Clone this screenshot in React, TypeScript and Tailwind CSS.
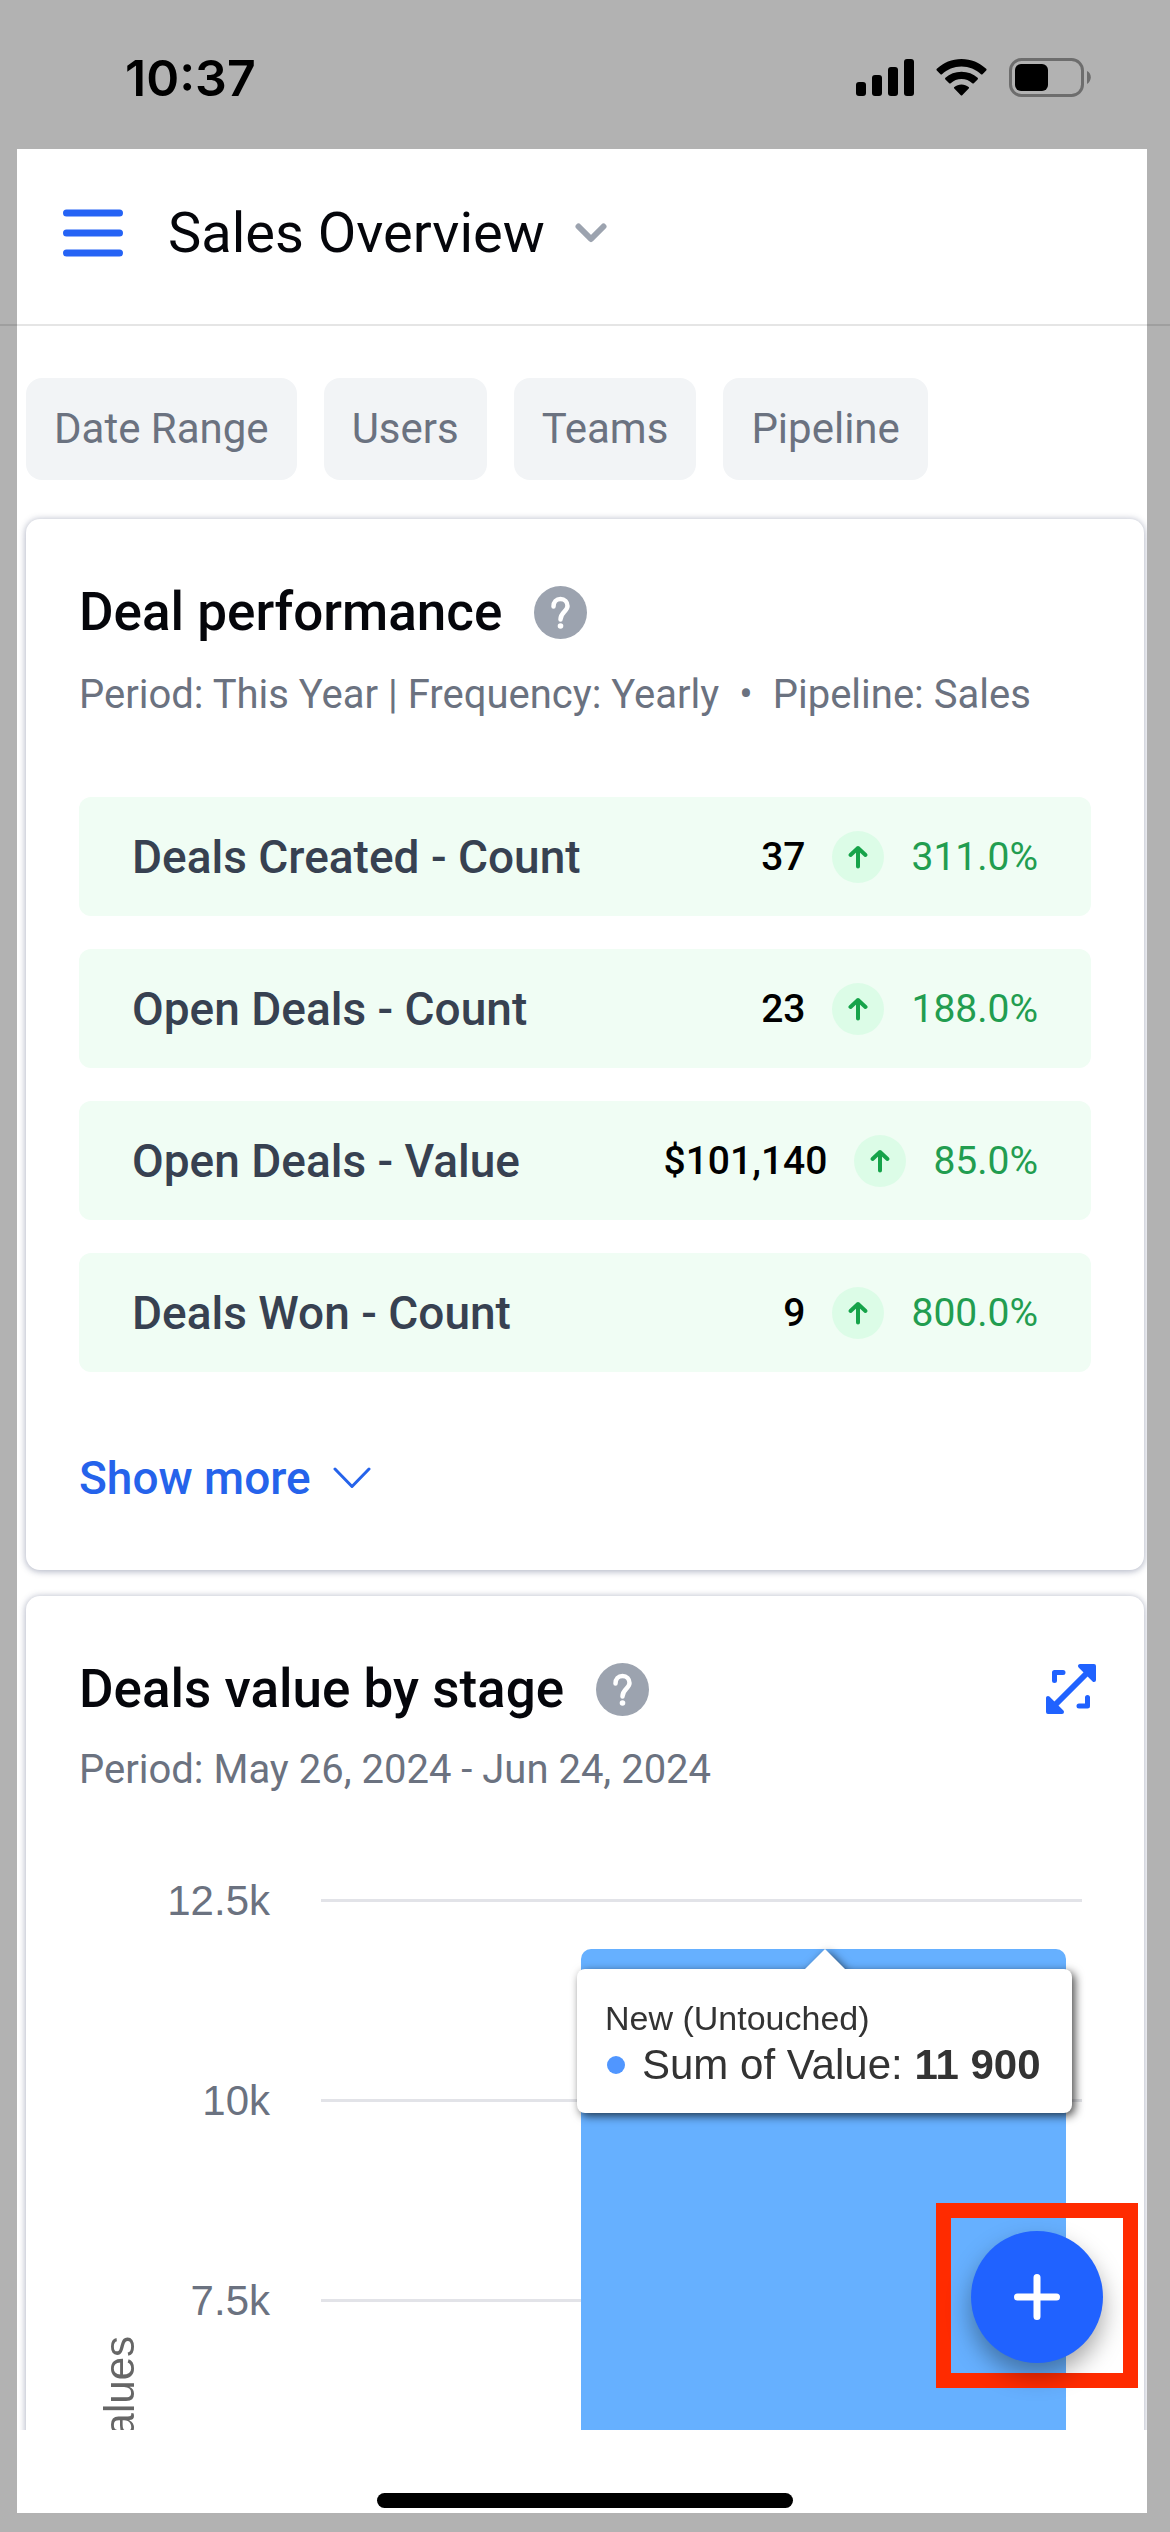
import React from 'react';

interface Metric {
  label: string;
  value: string;
  change: string;
}

const METRICS: Metric[] = [
  { label: 'Deals Created - Count', value: '37', change: '311.0%' },
  { label: 'Open Deals - Count', value: '23', change: '188.0%' },
  { label: 'Open Deals - Value', value: '$101,140', change: '85.0%' },
  { label: 'Deals Won - Count', value: '9', change: '800.0%' },
];

const FILTERS = ['Date Range', 'Users', 'Teams', 'Pipeline'];

const TICKS = ['12.5k', '10k', '7.5k'];

const StatusBar: React.FC = () => (
  <div className="flex h-[149px] shrink-0 items-center justify-between pt-3 pb-1.5 pl-[125px] pr-[79px] font-['Inter',sans-serif] text-[50px] leading-[60px] font-semibold text-black">
    <span>10:37</span>
    <div className="flex items-center gap-[22px]">
      <svg width="58" height="38" viewBox="0 0 58 38" fill="currentColor" aria-hidden="true">
        <rect x="0" y="23" width="10" height="14" rx="3" />
        <rect x="16" y="16" width="10" height="21" rx="3" />
        <rect x="32" y="8" width="10" height="29" rx="3" />
        <rect x="48" y="0" width="10" height="37" rx="3" />
      </svg>
      <svg width="51" height="38" viewBox="0 0 51 38" fill="currentColor" aria-hidden="true">
        <path d="M25.500 7.500C33 7.500 39.900 10.400 45 15.200C45.500 15.700 46.100 15.600 46.500 15.200L50.200 11.500C50.700 11 50.700 10.300 50.200 9.800C43.700 3.700 35 0 25.500 0S7.300 3.700.8 9.800C.3 10.300.3 11 .8 11.500L4.500 15.200C4.900 15.600 5.500 15.700 6 15.200C11.100 10.400 18 7.500 25.500 7.500Z" />
        <path d="M25.500 20C29.600 20 33.400 21.500 36.300 24.200C36.800 24.700 37.400 24.700 37.800 24.200L41.600 20.500C42.100 20 42.100 19.300 41.600 18.800C37.400 14.900 31.700 12.800 25.500 12.800S13.600 14.900 9.400 18.800C8.900 19.300 8.900 20 9.400 20.500L13.200 24.200C13.600 24.700 14.200 24.700 14.700 24.200C17.600 21.500 21.400 20 25.500 20Z" />
        <path d="M32.700 29.500C33.200 29 33.200 28.300 32.600 27.900C30.600 26.400 28.200 25.500 25.500 25.500S20.400 26.400 18.400 27.900C17.800 28.300 17.800 29 18.300 29.500L24.800 36.300C25.200 36.700 25.800 36.700 26.200 36.300Z" />
      </svg>
      <svg width="82" height="39" viewBox="0 0 82 39" aria-hidden="true">
        <rect x="1.500" y="1.500" width="72" height="36" rx="11" fill="none" stroke="#6d6d6d" strokeWidth="3" />
        <rect x="6" y="6" width="33" height="27" rx="6" fill="#000" />
        <path d="M78 13C83 15 83 23 78 26Z" fill="#6d6d6d" />
      </svg>
    </div>
  </div>
);

const HelpButton: React.FC<{ label: string }> = ({ label }) => (
  <button type="button" aria-label={label}>
    <svg width="53" height="53" viewBox="0 0 53 53" fill="none">
      <circle cx="26.500" cy="26.500" r="26.500" fill="#9ca3af" />
      <path d="M19.500 20.500C19.500 16 22.300 13 26.500 13S33.500 16 33.500 20C33.500 25.500 26.500 26 26.500 33.500" stroke="#fff" strokeWidth="4.500" strokeLinecap="round" />
      <circle cx="26.500" cy="40" r="2.800" fill="#fff" />
    </svg>
  </button>
);

const MetricRow: React.FC<{ metric: Metric }> = ({ metric }) => (
  <li className="flex h-[119px] items-center justify-between rounded-xl bg-[#f0fdf4] px-[53px]">
    <span className="text-[46px] leading-[56px] font-medium text-[#374151]">{metric.label}</span>
    <div className="flex items-center gap-[27px] text-[39px] leading-[48px]">
      <span className="font-medium text-black">{metric.value}</span>
      <span className="flex size-[52px] items-center justify-center rounded-full bg-[#dcfce7]">
        <svg width="22" height="26" viewBox="0 0 22 26" fill="none" stroke="#16a34a" strokeWidth="4" strokeLinecap="round" strokeLinejoin="round">
          <path d="M11 22.500V4M3.500 11L11 4L18.500 11" />
        </svg>
      </span>
      <span className="text-[#229d50]">{metric.change}</span>
    </div>
  </li>
);

const DealPerformanceCard: React.FC = () => (
  <section className="rounded-[14px] bg-white px-[53px] pt-[60px] pb-[64px] shadow-[0_1px_6px_1px_rgba(50,60,100,0.35)]">
    <div className="flex h-[66px] items-center gap-8">
      <h2 className="text-[53px] leading-[66px] font-medium text-[#05060b]">Deal performance</h2>
      <HelpButton label="About deal performance" />
    </div>
    <p className="mt-[26px] flex text-[40px] leading-[48px] text-[#6b7280]">
      <span>Period: This Year | Frequency: Yearly</span>
      <span className="px-5">•</span>
      <span>Pipeline: Sales</span>
    </p>
    <ul className="mt-[78px] flex flex-col gap-[33px]">
      {METRICS.map((metric) => (
        <MetricRow key={metric.label} metric={metric} />
      ))}
    </ul>
    <button type="button" className="mt-[78px] flex items-center gap-[22px] text-[46px] leading-[56px] font-medium text-[#2563eb]">
      Show more
      <svg width="38" height="22" viewBox="0 0 38 22" fill="none" stroke="currentColor" strokeWidth="3" strokeLinecap="round" strokeLinejoin="round">
        <path d="M2 2L19 19.500L36 2" />
      </svg>
    </button>
  </section>
);

const DealsByStageCard: React.FC = () => (
  <section className="rounded-[14px] bg-white px-[53px] pt-[60px] pb-[64px] shadow-[0_1px_6px_1px_rgba(50,60,100,0.35)]">
    <div className="flex h-[66px] items-center gap-8">
      <h2 className="text-[53px] leading-[66px] font-medium text-[#05060b]">Deals value by stage</h2>
      <HelpButton label="About deals value by stage" />
      <button type="button" aria-label="Expand chart" className="-mr-[5px] ml-auto text-[#2062ff]">
        <svg width="50" height="50" viewBox="0 0 50 50" fill="none" stroke="currentColor" strokeWidth="5" strokeLinecap="round" strokeLinejoin="round">
          <path d="M9 41L41 9" strokeWidth="6" />
          <path d="M34 2L48 2L48 16Z M2 34L2 48L16 48Z" fill="currentColor" strokeWidth="4" />
          <path d="M8.500 16.500V8.500H17 M33 42H41.500V33.500" />
        </svg>
      </button>
    </div>
    <p className="mt-6 text-[40px] leading-[48px] text-[#6b7280]">Period: May 26, 2024 - Jun 24, 2024</p>

    {/* Column chart: axis title, tick labels, plot */}
    <div className="mt-[105px] flex h-[1000px] pr-[9px] font-['Liberation_Sans',Arial,sans-serif]">
      <div className="-ml-1 flex w-[90px] items-center justify-center">
        <span className="rotate-180 text-[42px] leading-[48px] text-[#666] [writing-mode:vertical-rl]">Values</span>
      </div>
      <div className="-mt-[22px] flex w-[105px] flex-col">
        {TICKS.map((tick) => (
          <span key={tick} className="h-[200px] text-right text-[42px] leading-[48px] text-[#6b7280]">{tick}</span>
        ))}
      </div>
      <div className="relative ml-[51px] flex-1">
        {TICKS.map((tick) => (
          <div key={tick} className="h-[200px] border-t-3 border-[#e2e3e8]" />
        ))}
        <div className="absolute top-[50px] right-4 bottom-0 w-[485px] rounded-t-[10px] bg-[#66b0ff]">
          <div className="absolute top-5 -right-1.5 -left-1 drop-shadow-[3px_3px_5px_rgba(0,0,0,0.7)]">
            <svg width="42" height="21" viewBox="0 0 42 21" fill="#fff" className="absolute -top-5 left-1/2 -translate-x-1/2" aria-hidden="true">
              <path d="M0 21L21 0L42 21Z" />
            </svg>
            <div className="flex h-[144px] flex-col rounded-lg bg-white pt-7 pl-7 text-[#333]">
              <span className="text-[34px] leading-[42px]">New (Untouched)</span>
              <span className="flex items-center text-[42px] leading-[52px] whitespace-pre">
                <span className="mr-[17px] ml-0.5 size-[18px] rounded-full bg-[#5096ff]" />
                Sum of Value: <b>11 900</b>
              </span>
            </div>
          </div>
        </div>
      </div>
    </div>
  </section>
);

export default function App() {
  return (
    <div className="flex h-screen flex-col overflow-hidden bg-[#b2b2b2] pb-[19px] font-['Roboto',sans-serif]">
      <StatusBar />
      <main className="relative mr-[23px] ml-[17px] flex min-h-0 flex-1 flex-col bg-white">
        <header className="flex h-[175px] shrink-0 items-center pb-2 pl-[46px]">
          <button type="button" aria-label="Open menu" className="mr-[45px] text-[#2563f5]">
            <svg width="60" height="48" viewBox="0 0 60 48" stroke="currentColor" strokeWidth="7" strokeLinecap="round">
              <path d="M3.500 4H56.500M3.500 24H56.500M3.500 44H56.500" />
            </svg>
          </button>
          <button type="button" className="flex items-center gap-[30px]">
            <h1 className="text-[56px] leading-[66px] text-[#05060b]">Sales Overview</h1>
            <svg width="32" height="20" viewBox="0 0 32 20" fill="none" stroke="#9ca3af" strokeWidth="6" strokeLinecap="round" strokeLinejoin="round">
              <path d="M3.500 3.500L16 16L28.500 3.500" />
            </svg>
          </button>
        </header>
        <div className="-mr-[23px] -ml-[17px] h-0.5 shrink-0 bg-black/10" />

        <div className="flex min-h-0 flex-1 flex-col overflow-y-auto pr-[3px] pl-[9px] [scrollbar-width:none]">
          <div className="mt-[52px] mb-[39px] flex gap-[27px]">
            {FILTERS.map((filter) => (
              <button key={filter} type="button" className="h-[102px] rounded-2xl bg-[#f2f4f6] px-7 text-[42px] leading-[50px] text-[#6b7280]">
                {filter}
              </button>
            ))}
          </div>
          <div className="flex flex-col gap-[26px]">
            <DealPerformanceCard />
            <DealsByStageCard />
          </div>
        </div>

        <footer className="-mr-[23px] -ml-[17px] flex h-[83px] shrink-0 items-end justify-center pb-[5px]">
          <div className="h-[15px] w-[416px] rounded-full bg-black" />
        </footer>

        <div className="absolute right-[9px] bottom-[125px] border-[15px] border-[#ff2b00] px-5 pt-[13px] pb-[10px]">
          <button type="button" aria-label="Add" className="flex size-[132px] items-center justify-center rounded-full bg-[#2062ff] shadow-[0_12px_24px_rgba(0,0,0,0.35)]">
            <svg width="46" height="46" viewBox="0 0 46 46" stroke="#fff" strokeWidth="7" strokeLinecap="round">
              <path d="M23 3.500V42.500M3.500 23H42.500" />
            </svg>
          </button>
        </div>
      </main>
    </div>
  );
}
